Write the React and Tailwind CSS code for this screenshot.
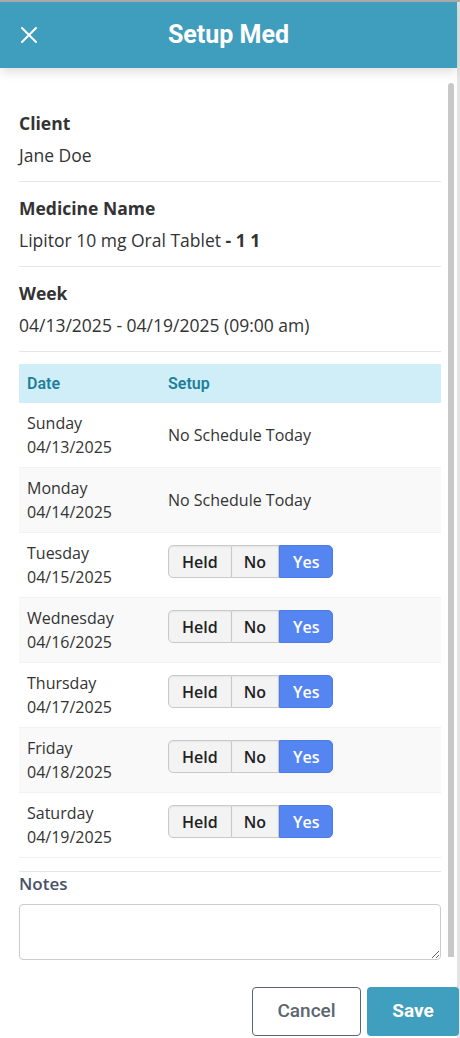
const days = [
  { day: "Sunday", date: "04/13/2025", sched: false },
  { day: "Monday", date: "04/14/2025", sched: false },
  { day: "Tuesday", date: "04/15/2025", sched: true },
  { day: "Wednesday", date: "04/16/2025", sched: true },
  { day: "Thursday", date: "04/17/2025", sched: true },
  { day: "Friday", date: "04/18/2025", sched: true },
  { day: "Saturday", date: "04/19/2025", sched: true },
];

function Toggle() {
  return (
    <div className="flex h-[33px] mb-[7px] text-[16px] font-semibold leading-none">
      <button className="px-[13px] rounded-l-[5px] border border-[#c9c9c9] bg-[#f3f3f3] text-[#222] shadow-[inset_0_1px_2px_rgba(0,0,0,0.06)]">
        Held
      </button>
      <button className="px-[12px] border-y border-r border-[#c9c9c9] bg-[#f3f3f3] text-[#222] shadow-[inset_0_1px_2px_rgba(0,0,0,0.06)]">
        No
      </button>
      <button className="px-[13px] rounded-r-[5px] border border-[#4b7be4] bg-[#5585f0] text-white">
        Yes
      </button>
    </div>
  );
}

function Field({ label, children }) {
  return (
    <div className="pt-[14px] pb-[14px] border-b border-[#e6e6e6]">
      <div className="text-[17.5px] leading-6 font-bold text-[#333]">{label}</div>
      <div className="mt-2 text-[17.5px] leading-6 text-[#333]">{children}</div>
    </div>
  );
}

export default function App() {
  return (
    <div
      className="w-[460px] h-[1038px] bg-white border-t-2 border-[#a9a9a9] overflow-hidden"
      style={{ fontFamily: "'Open Sans', sans-serif" }}
    >
      <div className="w-[460px] h-full border-r-[3px] border-[#e4e4e4] flex flex-col">
        {/* header */}
        <div
          className="relative z-10 h-[66px] bg-[#3f9dbd] flex items-center justify-center shadow-[0_4px_10px_rgba(0,0,0,0.13)]"
          style={{ fontFamily: "Roboto, sans-serif" }}
        >
          <svg className="absolute left-[21px] top-[25px]" width="16" height="16" viewBox="0 0 16 16">
            <path d="M1 1L15 15M15 1L1 15" stroke="white" strokeWidth="2" strokeLinecap="round" />
          </svg>
          <h1 className="text-[25px] font-bold text-white">Setup Med</h1>
        </div>

        {/* body */}
        <div className="flex">
          <div className="w-[441px] pl-[19px] pt-[29px]">
            <Field label="Client">Jane Doe</Field>
            <Field label="Medicine Name">
              Lipitor 10 mg Oral Tablet <span className="font-bold">- 1 1</span>
            </Field>
            <Field label="Week">04/13/2025 - 04/19/2025 (09:00 am)</Field>

            <div className="mt-[12px]">
              <div
                className="h-[39px] bg-[#d0eef8] flex items-center text-[16px] font-semibold text-[#1f7f9b]"
                style={{ fontFamily: "Roboto, sans-serif" }}
              >
                <div className="w-[141px] pl-2">Date</div>
                <div className="pl-2">Setup</div>
              </div>
              {days.map((d, i) => (
                <div
                  key={d.day}
                  className={`h-[65px] flex items-center border-b border-[#f2f2f2] text-[16px] leading-6 text-[#333] ${
                    i % 2 === 1 ? "bg-[#f9f9f9]" : "bg-white"
                  }`}
                >
                  <div className="w-[141px] pl-2">
                    <div>{d.day}</div>
                    <div>{d.date}</div>
                  </div>
                  <div className="pl-2">
                    {d.sched ? <Toggle /> : <span>No Schedule Today</span>}
                  </div>
                </div>
              ))}
            </div>

            <div className="mt-[13px] border-t border-[#e6e6e6]">
              <div className="text-[17px] leading-6 font-semibold text-[#4a5068]">Notes</div>
              <textarea className="mt-2 block w-full h-[56px] border border-[#cccccc] rounded-[4px] resize-y outline-none" />
            </div>
          </div>
          <div className="ml-[7px] mt-[15px] w-[6px] h-[874px] rounded-t-full bg-[#c8c8c8]" />
        </div>

        {/* footer */}
        <div
          className="mt-auto mb-[2px] flex justify-end gap-[6px] mr-[-2px]"
          style={{ fontFamily: "Roboto, sans-serif" }}
        >
          <button className="w-[109px] h-[49px] border border-[#5a6472] rounded-[4px] text-[19px] font-medium text-[#5c6670]">
            Cancel
          </button>
          <button className="w-[92px] h-[49px] rounded-[4px] bg-[#409ebe] text-[19px] font-bold text-white">
            Save
          </button>
        </div>
      </div>
    </div>
  );
}
